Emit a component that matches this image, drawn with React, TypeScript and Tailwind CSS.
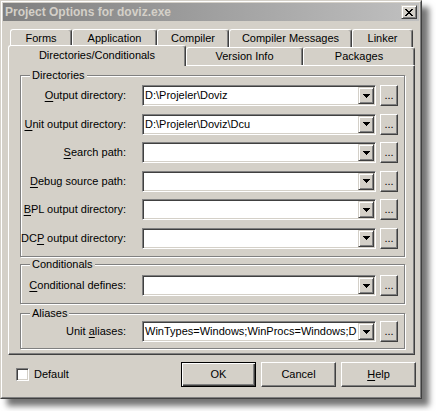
import React from "react";

type Row = { pre?: string; key: string; post: string; value?: string };

const dirRows: Row[] = [
  { key: "O", post: "utput directory:", value: "D:\\Projeler\\Doviz" },
  { key: "U", post: "nit output directory:", value: "D:\\Projeler\\Doviz\\Dcu" },
  { key: "S", post: "earch path:" },
  { key: "D", post: "ebug source path:" },
  { key: "B", post: "PL output directory:" },
  { pre: "DC", key: "P", post: " output directory:" },
];

const topTabs = [
  { label: "Forms", w: "w-[62px]" },
  { label: "Application", w: "w-[85px]" },
  { label: "Compiler", w: "w-[72px]" },
  { label: "Compiler Messages", w: "w-[123px]" },
  { label: "Linker", w: "w-[61px]" },
];

// caption close glyph, one string per pixel row
const xGlyph = ["11000011", "01100110", "00111100", "00011000", "00111100", "01100110", "11000011"];

const raised =
  "border border-t-white border-l-white border-r-[#404040] border-b-[#404040] shadow-[inset_-1px_-1px_0_#808080]";
const sunken =
  "border border-t-[#808080] border-l-[#808080] border-r-white border-b-white shadow-[inset_1px_1px_0_#404040,inset_-1px_-1px_0_#d4d0c8]";
const tabEdge =
  "border-l border-t border-r border-l-white border-t-white border-r-[#404040] rounded-t-[3px] shadow-[inset_-1px_0_0_#808080] bg-[#d4d0c8]";

function Accel({ row }: { row: Row }) {
  return (
    <span>
      {row.pre}
      <span className="underline underline-offset-[2px]">{row.key}</span>
      {row.post}
    </span>
  );
}

function Combo({ value }: { value?: string }) {
  return (
    <div className={`w-[234px] h-[21px] p-[1px] bg-white flex ${sunken}`}>
      <div className="flex-1 min-w-0 pl-[1px] leading-[17px] whitespace-nowrap overflow-hidden">{value}</div>
      <div
        className="shrink-0 w-[16px] h-[17px] flex items-center justify-center bg-[#d4d0c8] border border-t-[#d4d0c8] border-l-[#d4d0c8] border-r-[#404040] border-b-[#404040] shadow-[inset_1px_1px_0_#fff,inset_-1px_-1px_0_#808080]"
      >
        <svg width="7" height="4" viewBox="0 0 7 4" shapeRendering="crispEdges">
          <path d="M0 0h7v1h-1v1h-1v1h-1v1h-1v-1h-1v-1h-1v-1h-1z" fill="#000" />
        </svg>
      </div>
    </div>
  );
}

function Field({ row }: { row: Row }) {
  return (
    <div className="flex items-center h-[21px]">
      <div className="w-[105px] text-right whitespace-nowrap">
        <Accel row={row} />
      </div>
      <div className="ml-[16px]">
        <Combo value={row.value} />
      </div>
      <button className={`ml-[4px] w-[18px] h-[21px] bg-[#d4d0c8] leading-[17px] text-center ${raised}`}>...</button>
    </div>
  );
}

function Group({ title, className, children }: { title: string; className: string; children: React.ReactNode }) {
  return (
    <fieldset
      className={`w-[385px] border border-[#808080] shadow-[1px_1px_0_#fff,inset_1px_1px_0_#fff] ${className}`}
    >
      <legend className="ml-[9px] px-[2px] leading-[13px] bg-[#d4d0c8]">{title}</legend>
      {children}
    </fieldset>
  );
}

export default function App() {
  return (
    <div className="w-[436px] h-[411px] bg-white text-[11px] text-black font-['Liberation_Sans',Arial,sans-serif]">
      <div className="w-[422px] h-[399px] border border-t-[#d4d0c8] border-l-[#d4d0c8] border-r-[#404040] border-b-[#404040] shadow-[7px_7px_6px_rgba(0,0,0,0.55)]">
        <div className="h-full bg-[#d4d0c8] border border-t-white border-l-white border-r-[#808080] border-b-[#808080] p-[1px] flex flex-col">
          {/* caption */}
          <div className="h-[18px] flex items-center bg-linear-to-r from-[#808080] to-[#c0c0c0] pl-[2px] pr-[2px]">
            <span className="flex-1 font-bold text-[12px] leading-[18px] text-[#d4d0c8]">Project Options for doviz.exe</span>
            <div className="w-[16px] h-[14px] flex items-center justify-center bg-[#d4d0c8] border border-t-[#d4d0c8] border-l-[#d4d0c8] border-r-[#404040] border-b-[#404040] shadow-[inset_1px_1px_0_#fff,inset_-1px_-1px_0_#808080]">
              <svg width="8" height="7" viewBox="0 0 8 7" shapeRendering="crispEdges" className="-ml-[1px]">
                {xGlyph.map((line, y) =>
                  line.split("").map((c, x) =>
                    c === "1" ? <rect key={`${x}-${y}`} x={x} y={y} width="1" height="1" fill="#000" /> : null
                  )
                )}
              </svg>
            </div>
          </div>

          {/* page control */}
          <div className="ml-[5px] w-[407px] mt-[8px]">
            <div className="flex pl-[2px] h-[18px]">
              {topTabs.map((t) => (
                <div key={t.label} className={`${t.w} h-[18px] ${tabEdge} flex items-center justify-center`}>
                  {t.label}
                </div>
              ))}
            </div>
            <div className="flex items-start h-[21px] -mt-[2px]">
              <div className={`relative z-10 w-[178px] h-[21px] ${tabEdge} flex justify-center pt-[3px] leading-[13px]`}>
                Directories/Conditionals
              </div>
              <div className={`mt-[2px] w-[117px] h-[18px] ${tabEdge} flex items-center justify-center`}>Version Info</div>
              <div className={`mt-[2px] w-[112px] h-[18px] ${tabEdge} flex items-center justify-center`}>Packages</div>
            </div>
            <div className={`-mt-[1px] h-[290px] bg-[#d4d0c8] pl-[11px] pt-[3px] ${raised}`}>
              <Group title="Directories" className="pt-[3px] pb-[7.5px]">
                <div className="flex flex-col gap-[7.5px]">
                  {dirRows.map((r) => (
                    <Field key={r.key + r.post} row={r} />
                  ))}
                </div>
              </Group>
              <Group title="Conditionals" className="mt-[1px] pt-[4px] pb-[7px]">
                <Field row={{ key: "C", post: "onditional defines:" }} />
              </Group>
              <Group title="Aliases" className="mt-[3px] pt-[1px] pb-[6px]">
                <Field row={{ pre: "Unit ", key: "a", post: "liases:", value: "WinTypes=Windows;WinProcs=Windows;D" }} />
              </Group>
            </div>
          </div>

          {/* footer */}
          <div className="flex items-center mt-[7px] pl-[13px] pr-[3px]">
            <div className={`w-[13px] h-[13px] bg-white ${sunken}`} />
            <span className="ml-[5px]">Default</span>
            <div className="flex-1" />
            <button className="w-[75px] h-[25px] bg-[#d4d0c8] border border-black shadow-[inset_1px_1px_0_#fff,inset_-1px_-1px_0_#404040,inset_-2px_-2px_0_#808080]">
              OK
            </button>
            <button className={`ml-[5px] w-[75px] h-[25px] bg-[#d4d0c8] ${raised}`}>Cancel</button>
            <button className={`ml-[5px] w-[75px] h-[25px] bg-[#d4d0c8] ${raised}`}>
              <span className="underline underline-offset-[2px]">H</span>elp
            </button>
          </div>
        </div>
      </div>
    </div>
  );
}
